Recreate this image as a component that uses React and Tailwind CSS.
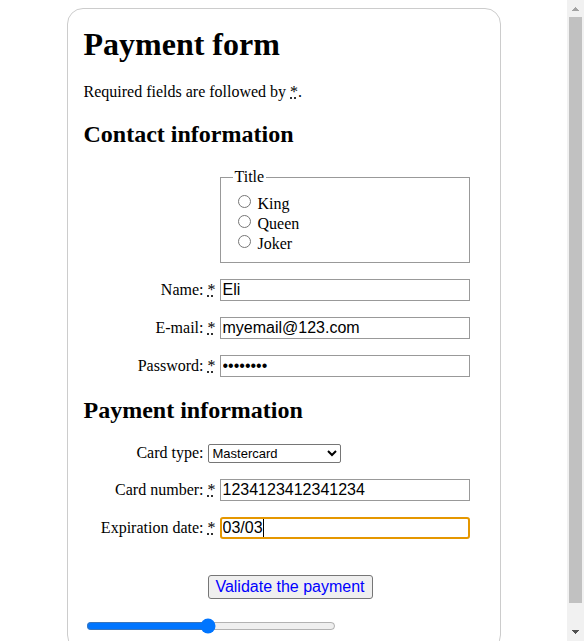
import React from "react";

function Required() {
  return (
    <abbr title="required" className="w-2 leading-5 underline decoration-dotted">
      *
    </abbr>
  );
}

function Field({ id, label, type = "text", value }) {
  return (
    <div className="mb-4 flex items-center gap-1">
      <label htmlFor={id} className="w-[120px] text-right leading-5">
        {label}
      </label>
      <Required />
      <input
        id={id}
        type={type}
        defaultValue={value}
        required
        className="h-[22px] min-w-0 w-[250px] border border-[#999] bg-white px-0.5 font-[Liberation_Sans,Arial,sans-serif] text-base outline-none"
      />
    </div>
  );
}

function ActiveField({ id, label, value }) {
  return (
    <div className="flex items-center gap-1">
      <label htmlFor={id} className="w-[120px] text-right leading-5">
        {label}
      </label>
      <Required />
      <div className="relative w-[250px] min-w-0">
        <input
          id={id}
          type="text"
          defaultValue={value}
          required
          className="block h-[22px] w-full rounded-[3px] border-2 border-[#e59700] bg-white px-px font-[Liberation_Sans,Arial,sans-serif] text-base caret-transparent outline-none"
        />
        <span className="absolute top-0.5 left-[43px] h-[18px] w-px bg-black" />
      </div>
    </div>
  );
}

function Scrollbar() {
  return (
    <div aria-hidden="true" className="flex w-[17px] shrink-0 flex-col items-center bg-[#f1f1f1]">
      <svg width="17" height="17" viewBox="0 0 17 17" fill="#a3a3a3" shapeRendering="crispEdges">
        <path d="M8 7h1v1h1v1h1v1h1v1H5v-1h1V9h1V8h1z" />
      </svg>
      <div className="mb-[21px] w-[13px] flex-1 bg-[#c1c1c1]" />
      <svg width="17" height="17" viewBox="0 0 17 17" fill="#505050" shapeRendering="crispEdges">
        <path d="M5 6h7v1h-1v1h-1v1H9v1H8V9H7V8H6V7H5z" />
      </svg>
    </div>
  );
}

export default function App() {
  return (
    <div className="flex h-screen bg-white font-[Liberation_Serif,Times_New_Roman,serif] text-base text-black">
      <main className="min-w-0 flex-1 overflow-y-auto p-2 [scrollbar-width:none]">
        <form
          onSubmit={(e) => e.preventDefault()}
          className="mx-auto max-w-[434px] rounded-2xl border border-[#ccc] p-4"
        >
          <h1 className="mb-[19px] text-[32px] leading-[38px] font-bold">Payment form</h1>
          <p className="mb-[18px] leading-5">
            Required fields are followed by <Required />.
          </p>
          <section>
            <h2 className="mb-5 text-2xl leading-7 font-bold">Contact information</h2>
            <fieldset className="mb-4 ml-[136px] w-[250px] border border-[#999] px-3 pb-[9px]">
              <legend className="px-0.5 leading-[18px]">Title</legend>
              <ul className="pt-[7px]">
                {["King", "Queen", "Joker"].map((title) => (
                  <li key={title} className="flex h-5 items-start gap-[7px] pl-[5px]">
                    <input
                      id={title}
                      type="radio"
                      name="title"
                      value={title}
                      className="mt-0.5 size-[13px]"
                    />
                    <label htmlFor={title} className="leading-[22px]">
                      {title}
                    </label>
                  </li>
                ))}
              </ul>
            </fieldset>
            <Field id="name" label="Name:" value="Eli" />
            <Field id="mail" label="E-mail:" type="email" value="myemail@123.com" />
            <Field id="password" label="Password:" type="password" value="password" />
          </section>
          <section>
            <h2 className="my-[19px] text-2xl leading-7 font-bold">Payment information</h2>
            <div className="mb-4 flex items-center gap-1">
              <label htmlFor="card" className="w-[120px] text-right leading-5">
                Card type:
              </label>
              <select
                id="card"
                defaultValue="mc"
                className="h-[19px] w-[133px] rounded-xs border border-[#767676] bg-white font-[Liberation_Sans,Arial,sans-serif] text-[13px]"
              >
                <option value="visa">Visa</option>
                <option value="mc">Mastercard</option>
                <option value="amex">American Express</option>
              </select>
            </div>
            <Field id="number" label="Card number:" type="tel" value="1234123412341234" />
            <ActiveField id="expiration" label="Expiration date:" value="03/03" />
          </section>
          <button
            type="submit"
            className="mt-9 ml-[124px] block h-6 w-[165px] rounded-[3px] border border-[#767676] bg-[#efefef] text-center font-[Liberation_Sans,Arial,sans-serif] text-base leading-5 text-[#0000ff]"
          >
            Validate the payment
          </button>
          <input
            type="range"
            aria-label="Amount"
            min="0"
            max="100"
            defaultValue="49"
            className="mt-[19px] ml-0.5 block h-4 w-[250px]"
          />
        </form>
      </main>
      <Scrollbar />
    </div>
  );
}
